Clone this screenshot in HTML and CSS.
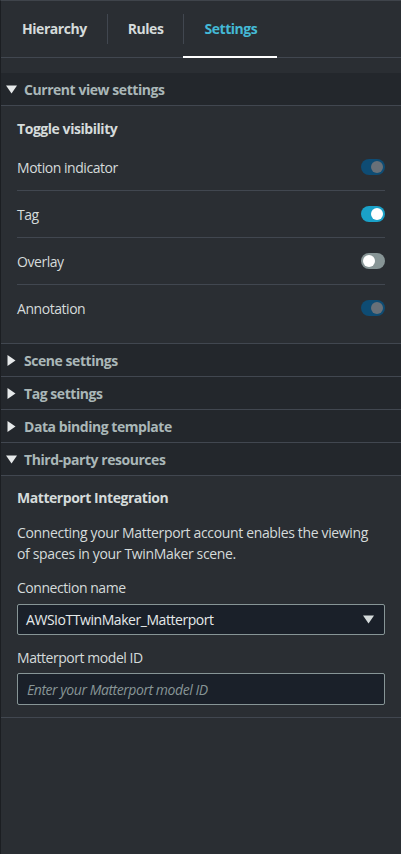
FILE: index.html
```html
<!DOCTYPE html>
<html lang="en">
<head>
<meta charset="utf-8">
<title>Settings panel</title>
<link rel="stylesheet" href="styles.css">
</head>
<body>
<div class="panel">
  <nav class="tabs">
    <div class="tab">Hierarchy</div>
    <div class="tab">Rules</div>
    <div class="tab active">Settings</div>
  </nav>
  <div class="sections">
    <section class="section">
      <header class="sec-head">
        <svg class="caret" width="11" height="9" viewBox="0 0 11 9"><path d="M0 0.5H11L5.5 8.5Z"/></svg>
        <span>Current view settings</span>
      </header>
      <div class="sec-body">
        <div class="sub-title">Toggle visibility</div>
        <div class="row"><span>Motion indicator</span><span class="toggle on disabled"><i></i></span></div>
        <div class="row"><span>Tag</span><span class="toggle on"><i></i></span></div>
        <div class="row"><span>Overlay</span><span class="toggle off"><i></i></span></div>
        <div class="row"><span>Annotation</span><span class="toggle on disabled"><i></i></span></div>
      </div>
    </section>
    <section class="section">
      <header class="sec-head">
        <svg class="caret" width="11" height="11" viewBox="0 0 11 11"><path d="M1.5 0V11L9.5 5.5Z"/></svg>
        <span>Scene settings</span>
      </header>
    </section>
    <section class="section">
      <header class="sec-head">
        <svg class="caret" width="11" height="11" viewBox="0 0 11 11"><path d="M1.5 0V11L9.5 5.5Z"/></svg>
        <span>Tag settings</span>
      </header>
    </section>
    <section class="section">
      <header class="sec-head">
        <svg class="caret" width="11" height="11" viewBox="0 0 11 11"><path d="M1.5 0V11L9.5 5.5Z"/></svg>
        <span>Data binding template</span>
      </header>
    </section>
    <section class="section">
      <header class="sec-head">
        <svg class="caret" width="11" height="9" viewBox="0 0 11 9"><path d="M0 0.5H11L5.5 8.5Z"/></svg>
        <span>Third-party resources</span>
      </header>
      <div class="sec-body form">
        <div class="sub-title">Matterport Integration</div>
        <p class="desc">Connecting your Matterport account enables the viewing of spaces in your TwinMaker scene.</p>
        <div class="label">Connection name</div>
        <div class="select">
          <span>AWSIoTTwinMaker_Matterport</span>
          <svg width="11" height="9" viewBox="0 0 11 9"><path d="M0 0.5H11L5.5 8.5Z"/></svg>
        </div>
        <div class="label second">Matterport model ID</div>
        <div class="input">Enter your Matterport model ID</div>
      </div>
    </section>
  </div>
</div>
</body>
</html>
```

FILE: styles.css
```css
* { box-sizing: border-box; }
html, body { margin: 0; padding: 0; height: 100%; }
body {
  background: #2a2e33;
  font-family: "Open Sans", "Noto Sans", sans-serif;
  font-size: 14px;
  letter-spacing: -0.45px;
  color: #d5dbdb;
}
.panel {
  min-height: 854px;
  background: #2a2e33;
  border-top: 1px solid #3f444b;
  border-left: 1px solid #1b1e22;
}
.tabs {
  display: flex;
  height: 57px;
  border-bottom: 1px solid #414750;
}
.tab {
  position: relative;
  display: flex;
  align-items: center;
  padding: 0 20px 2px 21px;
  font-weight: 700;
  color: #d5dbdb;
}
.tab + .tab::before {
  content: "";
  position: absolute;
  left: 0;
  top: 13px;
  height: 30px;
  width: 1px;
  background: #414750;
}
.tab.active { color: #44b9d6; }
.tab.active::after {
  content: "";
  position: absolute;
  left: 0;
  right: 0;
  bottom: -1px;
  height: 2px;
  background: #ffffff;
}
.sections { padding-top: 15px; }
.section { border-bottom: 1px solid #414750; }
.sec-head {
  display: flex;
  align-items: center;
  height: 32px;
  padding-left: 5px;
  gap: 7px;
  background: #23272c;
  font-weight: 700;
  color: #aab7b8;
}
.section:first-child .sec-head { border-bottom: 1px solid #414750; height: 33px; }
.sec-head .caret { fill: #e6e9ea; flex: none; }
.section:nth-child(5) .sec-head { border-bottom: 1px solid #414750; height: 33px; }
.sec-body { padding: 13px 16px 12px 16px; }
.sub-title {
  font-weight: 700;
  line-height: 20px;
  margin-bottom: 5px;
}
.row {
  display: flex;
  align-items: center;
  justify-content: space-between;
  height: 47px;
  border-bottom: 1px solid #414750;
}
.row:last-child { border-bottom: none; height: 46px; }
.toggle {
  position: relative;
  width: 24px;
  height: 16px;
  border-radius: 8px;
  display: block;
}
.toggle i {
  position: absolute;
  top: 2px;
  width: 12px;
  height: 12px;
  border-radius: 50%;
  background: #ffffff;
}
.toggle.on { background: #1aa1c8; }
.toggle.on i { right: 2px; }
.toggle.off { background: #879596; }
.toggle.off i { left: 2px; }
.toggle.disabled { background: #0e4c74; }
.toggle.disabled i { background: #687078; }
.form { padding-top: 12px; padding-bottom: 12px; }
.desc {
  margin: 14px 0 14px;
  padding-right: 8px;
  line-height: 21px;
  letter-spacing: -0.35px;
}
.label { line-height: 20px; margin-bottom: 6px; }
.label.second { margin-top: 13px; margin-bottom: 5px; }
.select, .input {
  height: 31px;
  border: 1px solid #879596;
  border-radius: 2px;
  background: #1a2029;
  display: flex;
  align-items: center;
  padding: 0 10px 0 8px;
}
.select { justify-content: space-between; color: #e5e9ea; }
.select svg { fill: #d5dbdb; }
.input {
  height: 32px;
  font-style: italic;
  color: #879596;
  padding-left: 9px;
}
```
